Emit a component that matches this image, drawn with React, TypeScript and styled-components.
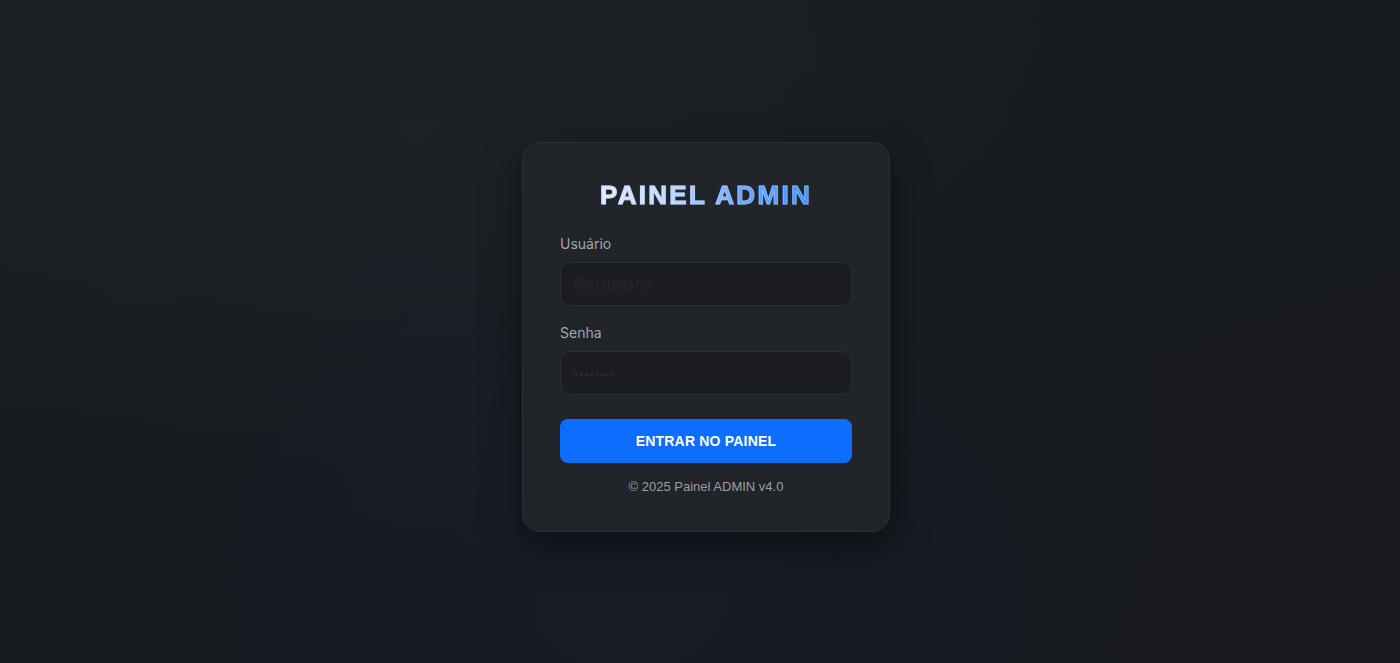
import styled, { createGlobalStyle } from "styled-components";

const GlobalStyle = createGlobalStyle`
    * {
        box-sizing: border-box;
    }

    body {
        margin: 0;
        background: #16191d;
        font-family: 'Inter', 'Liberation Sans', sans-serif;
    }
`;

const Page = styled.main`
    min-height: 100vh;
    display: flex;
    align-items: center;
    justify-content: center;
    padding: 10px 0 0 12px;
    background:
        radial-gradient(ellipse at 30% 20%, rgba(40, 44, 52, 0.35), transparent 60%),
        radial-gradient(ellipse at 45% 90%, rgba(24, 30, 44, 0.6), transparent 55%),
        linear-gradient(160deg, #1a1d21 0%, #16191d 50%, #17191d 100%);
`;

const Card = styled.form`
    width: 368px;
    padding: 37px;
    background: #212428;
    border: 1px solid #2c2f34;
    border-radius: 18px;
    box-shadow: 0 14px 40px rgba(0, 0, 0, 0.45);
`;

const Title = styled.h1`
    margin: 0 0 25px;
    font-family: 'Liberation Sans', Arial, sans-serif;
    font-size: 26px;
    line-height: 30px;
    font-weight: 700;
    letter-spacing: 2.3px;
    text-align: center;
    background: linear-gradient(90deg, #f4f8ff 0%, #c4dbff 38%, #6aa6ff 62%, #2b84ff 100%);
    -webkit-background-clip: text;
    background-clip: text;
    color: transparent;
    -webkit-text-stroke: 1px rgba(190, 215, 255, 0.5);
`;

const Field = styled.div`
    margin-bottom: ${(p: { $last?: boolean }) => (p.$last ? "24px" : "18px")};
`;

const Label = styled.label`
    display: block;
    margin-bottom: 10px;
    font-size: 14px;
    line-height: 17px;
    color: #a3a7ad;
`;

const Input = styled.input`
    display: block;
    width: 100%;
    height: 44px;
    padding: 0 12px;
    background: #1b1d20;
    border: 1px solid #2a2d31;
    border-radius: 10px;
    font-family: 'Inter', sans-serif;
    font-size: 14px;
    color: #e4e6ea;
    outline: none;

    &::placeholder {
        color: #27292d;
    }

    &[type="password"]::placeholder {
        font-size: 11px;
        letter-spacing: -1px;
    }
`;

const Button = styled.button`
    display: block;
    width: 100%;
    height: 44px;
    border: none;
    border-radius: 8px;
    background: #0d6efd;
    color: #ffffff;
    font-family: 'Liberation Sans', Arial, sans-serif;
    font-size: 14px;
    font-weight: 700;
    letter-spacing: 0.2px;
    cursor: pointer;
`;

const Footer = styled.p`
    margin: 16px 0 0;
    font-family: 'Liberation Sans', Arial, sans-serif;
    font-size: 13px;
    line-height: 15px;
    text-align: center;
    color: #9b9fa5;
`;

export default function App() {
    return (
        <>
            <GlobalStyle />
            <Page>
                <Card onSubmit={e => e.preventDefault()}>
                    <Title>PAINEL ADMIN</Title>
                    <Field>
                        <Label htmlFor="user">Usuário</Label>
                        <Input id="user" type="text" placeholder="Seu usuário" />
                    </Field>
                    <Field $last>
                        <Label htmlFor="pass">Senha</Label>
                        <Input id="pass" type="password" placeholder="••••••••" />
                    </Field>
                    <Button type="submit">ENTRAR NO PAINEL</Button>
                    <Footer>© 2025 Painel ADMIN v4.0</Footer>
                </Card>
            </Page>
        </>
    );
}
